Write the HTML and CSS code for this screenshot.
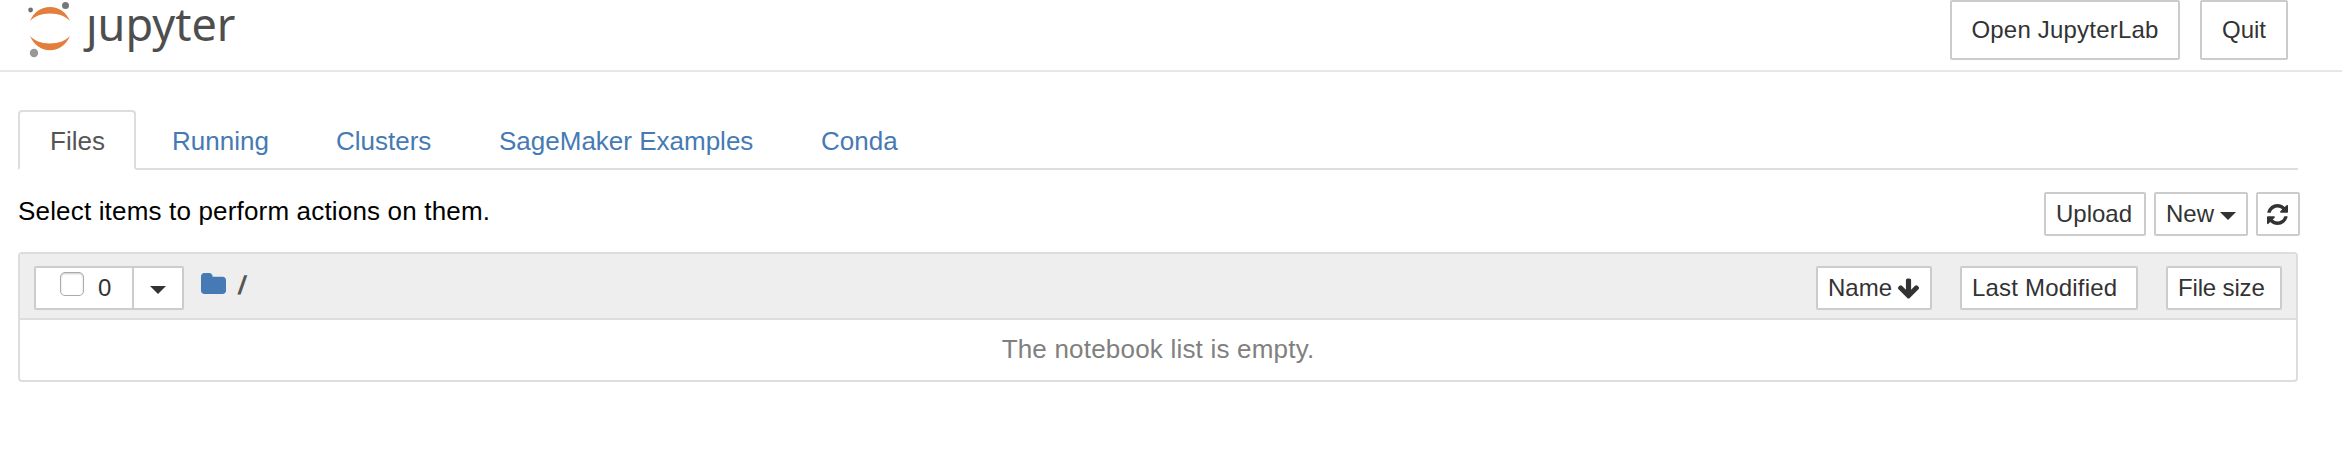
FILE: index.html
```html
<!DOCTYPE html>
<html lang="en">
<head>
<meta charset="utf-8">
<title>Home</title>
<link rel="stylesheet" href="styles.css">
</head>
<body>
<header class="header">
  <a class="logo">
    <svg class="logo-mark" width="48" height="60" viewBox="0 0 48 60">
      <path fill="#e37e3d" d="M4 21C7.500 12.500 15 7 24 7s16.500 5.500 20 14C40 16.500 33 13.500 24 13.500S8 16.500 4 21zM4 36c3.500 8.500 11 14.200 20 14.200S40.500 44.500 44 36c-4 4.500-11 7.500-20 7.500S8 40.500 4 36z"/>
      <circle cx="4.600" cy="10" r="2.400" fill="#6f7070"/>
      <circle cx="39.500" cy="5.500" r="3.500" fill="#767677"/>
      <circle cx="8" cy="53" r="4.200" fill="#989898"/>
    </svg>
    <span class="wordmark">ȷupyter</span>
  </a>
  <div class="header-actions">
    <button class="btn btn-lg open-lab"><span>Open JupyterLab</span></button>
    <button class="btn btn-lg quit"><span>Quit</span></button>
  </div>
</header>
<main class="main">
  <nav class="tabs">
    <a class="tab active files"><span>Files</span></a>
    <a class="tab running"><span>Running</span></a>
    <a class="tab clusters"><span>Clusters</span></a>
    <a class="tab examples"><span>SageMaker Examples</span></a>
    <a class="tab conda"><span>Conda</span></a>
  </nav>
  <div class="toolbar">
    <p class="hint">Select items to perform actions on them.</p>
    <div class="toolbar-actions">
      <button class="btn upload">Upload</button>
      <button class="btn new">New<i class="caret"></i></button>
      <button class="btn refresh" aria-label="Refresh">
        <svg width="21" height="21" viewBox="0 0 1536 1536"><path fill="#333" d="M1511 928q0 5-1 7-64 268-268 434.500t-478 166.500q-146 0-282.500-55t-243.500-157l-129 129q-19 19-45 19t-45-19-19-45v-448q0-26 19-45t45-19h448q26 0 45 19t19 45-19 45l-137 137q71 66 161 102t187 36q134 0 250-65t186-179q11-17 53-117 8-23 30-23h192q13 0 22.500 9.500t9.500 22.500zm25-800v448q0 26-19 45t-45 19h-448q-26 0-45-19t-19-45 19-45l138-138q-148-137-349-137-134 0-250 65t-186 179q-11 17-53 117-8 23-30 23h-199q-13 0-22.500-9.500t-9.500-22.500v-7q65-268 270-434.500t480-166.500q146 0 284 55.500t245 156.500l130-129q19-19 45-19t45 19 19 45z"/></svg>
      </button>
    </div>
  </div>
  <section class="list">
    <div class="list-header">
      <div class="select-group">
        <button class="btn select-all"><i class="checkbox"></i><span>0</span></button>
        <button class="btn select-menu" aria-label="Select"><i class="caret"></i></button>
      </div>
      <div class="breadcrumb">
        <svg width="25" height="21" viewBox="64 128 1664 1408" preserveAspectRatio="none"><path fill="#467ab4" d="M1728 608v704q0 92-66 158t-158 66h-1216q-92 0-158-66t-66-158v-960q0-92 66-158t158-66h320q92 0 158 66t66 158v32h672q92 0 158 66t66 158z"/></svg>
        <span class="slash">/</span>
      </div>
      <div class="sorts">
        <button class="btn sort-name"><span>Name</span><svg width="21" height="22" viewBox="117 64 1558 1547"><path fill="#333" d="M1675 832q0 53-37 90l-651 652q-39 37-91 37-53 0-90-37l-651-652q-38-36-38-90 0-53 38-91l74-75q39-37 91-37 53 0 90 37l294 294v-704q0-52 38-90t90-38h128q52 0 90 38t38 90v704l294-294q37-37 90-37 52 0 91 37l75 75q37 39 37 91z"/></svg></button>
        <button class="btn sort-modified">Last Modified</button>
        <button class="btn sort-size">File size</button>
      </div>
    </div>
    <div class="empty">The notebook list is empty.</div>
  </section>
</main>
</body>
</html>
```

FILE: styles.css
```css
* { box-sizing: border-box; }
body {
  margin: 0;
  background: #fff;
  color: #000;
  font: 26px/36px "Liberation Sans", Arial, sans-serif;
}
.header {
  display: flex;
  justify-content: space-between;
  height: 72px;
  padding: 0 54px 0 26px;
  border-bottom: 2px solid #e7e7e7;
}
.logo { display: flex; height: 60px; }
.logo-mark { display: block; }
.wordmark {
  margin-left: 12px;
  color: #4e4e4e;
  font: 45px/48px "Noto Sans", sans-serif;
}
.header-actions { display: flex; gap: 20px; }
.btn {
  display: flex;
  align-items: center;
  height: 44px;
  margin: 0;
  padding: 0 10px;
  border: 2px solid #ccc;
  border-radius: 2px;
  background: #fff;
  color: #333;
  font: 24px/36px "Liberation Sans", Arial, sans-serif;
  white-space: nowrap;
}
.btn-lg { height: 60px; justify-content: center; padding: 0; }
.open-lab { width: 230px; letter-spacing: 0.2px; }
.quit { width: 88px; }
.main { padding: 38px 44px 0 18px; }
.tabs {
  display: flex;
  gap: 4px;
  height: 60px;
  border-bottom: 2px solid #ddd;
}
.tab {
  height: 60px;
  padding: 11px 30px 0;
  border: 2px solid transparent;
  color: #467ab4;
  white-space: nowrap;
}
.tab.active {
  border-color: #ddd;
  border-bottom-color: #fff;
  border-radius: 4px 4px 0 0;
  background: #fff;
  color: #555;
}
.files { width: 118px; }
.running { width: 160px; }
.clusters { width: 159px; }
.examples { width: 318px; }
.toolbar {
  display: flex;
  justify-content: space-between;
  height: 82px;
  margin-right: -2px;
}
.hint { margin: 23px 0 0; letter-spacing: 0.17px; }
.toolbar-actions { display: flex; gap: 8px; padding-top: 22px; }
.upload { width: 102px; }
.new { width: 94px; }
.refresh { width: 44px; padding: 0 0 0 9px; }
.caret {
  border: 8px solid transparent;
  border-top-color: #333;
  border-bottom: 0;
}
.new .caret { margin: 4px 0 0 6px; }
.list { height: 130px; border: 2px solid #ddd; border-radius: 4px; }
.list-header {
  display: flex;
  height: 66px;
  padding: 12px 14px 0;
  border-bottom: 2px solid #ddd;
  background: #eee;
}
.select-group { display: flex; }
.select-all { width: 100px; padding: 0 0 0 24px; border-radius: 2px 0 0 2px; }
.select-menu { width: 52px; margin-left: -2px; padding: 4px 0 0 16px; border-radius: 0 2px 2px 0; }
.checkbox {
  width: 24px;
  height: 24px;
  margin: 0 14px 8px 0;
  border: 1px solid #aaa;
  border-radius: 5px;
  background: #fff;
  box-shadow: inset 0 1px 2px #ccc;
}
.breadcrumb { display: flex; margin-left: 17px; padding-top: 7px; }
.slash {
  margin-left: 11px;
  color: #555;
  font-weight: bold;
  line-height: 24px;
  transform: skewX(-9deg);
}
.sorts { display: flex; gap: 28px; margin-left: auto; }
.sort-name { width: 116px; }
.sort-name svg { margin-left: 6px; }
.sort-modified { width: 178px; letter-spacing: 0.2px; }
.sort-size { width: 116px; letter-spacing: -0.15px; }
.empty { padding-top: 11px; color: #808080; text-align: center; letter-spacing: 0.2px; }
```
